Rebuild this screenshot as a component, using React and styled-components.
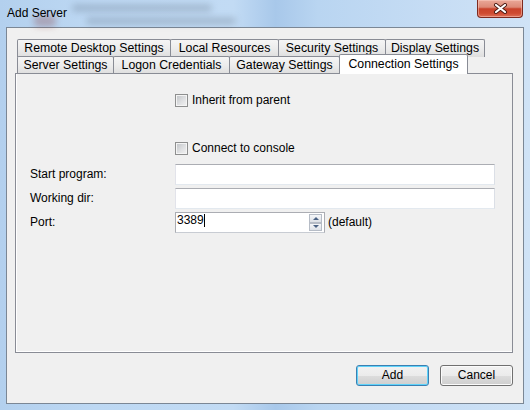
import styled, { createGlobalStyle } from "styled-components";

const GlobalStyle = createGlobalStyle`
  html, body {
    margin: 0;
    padding: 0;
  }
  body {
    font-family: "Liberation Sans", Arial, sans-serif;
    font-size: 12px;
    color: #000;
    background: #bcd6f1;
  }
`;

const Window = styled.div`
  position: relative;
  width: 530px;
  height: 410px;
  box-sizing: border-box;
  display: flex;
  flex-direction: column;
  padding: 0 6px 6px 6px;
  overflow: hidden;
  background: linear-gradient(
    90deg,
    #b3d0ee 0%,
    #bdd8f3 18%,
    #c2dbf4 44%,
    #a8c8ea 52%,
    #b9d5f1 60%,
    #c5dcf4 80%,
    #d0e3f6 100%
  );
`;

// blurred desktop showing through the glass frame
const Haze = styled.div`
  position: absolute;
  left: ${(p) => p.$x}px;
  top: ${(p) => p.$y}px;
  width: ${(p) => p.$w}px;
  height: ${(p) => p.$h}px;
  background: ${(p) => p.$c};
  filter: blur(3px);
  border-radius: 4px;
`;

const TitleBar = styled.div`
  position: relative;
  height: 27px;
  flex: none;
  display: flex;
  align-items: flex-start;
  justify-content: space-between;
`;

const Title = styled.div`
  padding: 6px 0 0 1px;
  font-size: 12px;
  color: #000;
`;

const CloseButton = styled.div`
  width: 46px;
  height: 18px;
  margin-right: 1px;
  box-sizing: border-box;
  border: 1px solid #7e2a1f;
  border-top: none;
  border-radius: 0 0 4px 4px;
  background: linear-gradient(
    #eaa898 0%,
    #dd8a77 42%,
    #c9432b 52%,
    #cf4b31 78%,
    #de7058 100%
  );
  box-shadow: inset 0 0 0 1px rgba(255, 215, 205, 0.45);
  display: flex;
  align-items: center;
  justify-content: center;
`;

const Client = styled.div`
  flex: 1;
  display: flex;
  flex-direction: column;
  background: #f0f0f0;
  border: 1px solid #7b8795;
`;

const TabStrip = styled.div`
  margin: 11px 0 0 10px;
  display: flex;
  flex-direction: column;
`;

const TabRow = styled.div`
  height: 17px;
  display: flex;
  align-items: flex-start;
`;

const Tab = styled.div`
  position: relative;
  box-sizing: border-box;
  width: ${(p) => p.$w}px;
  height: ${(p) => (p.$active ? 20 : 18)}px;
  margin-top: ${(p) => (p.$active ? -2 : 0)}px;
  margin-right: -1px;
  border: 1px solid #898c95;
  border-bottom: none;
  border-radius: 2px 2px 0 0;
  background: ${(p) =>
    p.$active
      ? "#ffffff"
      : "linear-gradient(#f5f5f5 0%, #ececec 50%, #dedede 100%)"};
  z-index: ${(p) => (p.$active ? 2 : 0)};
  display: flex;
  justify-content: center;
  padding-top: ${(p) => (p.$active ? 2 : 1)}px;
  font-size: 12.3px;
  line-height: 14px;
  white-space: nowrap;
`;

const Panel = styled.div`
  position: relative;
  z-index: 1;
  height: 280px;
  box-sizing: border-box;
  margin: 0 10px 0 8px;
  border: 1px solid #898c95;
  background: #f0f0f0;
  box-shadow: inset 1px -1px 0 #ffffff;
`;

const Form = styled.div`
  display: flex;
  flex-direction: column;
  padding: 20px 0 0 14px;
`;

const Row = styled.div`
  display: flex;
  align-items: center;
  height: ${(p) => p.$h}px;
  margin-top: ${(p) => p.$gap || 0}px;
`;

const Label = styled.div`
  width: 145px;
  flex: none;
  font-size: 12px;
  margin-top: -2px;
`;

const CheckLabel = styled.label`
  display: flex;
  align-items: center;
  gap: 4px;
  font-size: 12px;
  line-height: 13px;
`;

const CheckBox = styled.span`
  width: 13px;
  height: 13px;
  box-sizing: border-box;
  border: 1px solid #8e8f8f;
  background: linear-gradient(135deg, #bfc2c6 0%, #dfe0e2 55%, #f3f3f3 100%);
  box-shadow: inset 0 0 0 1px #f4f4f4;
`;

const TextField = styled.div`
  width: ${(p) => p.$w}px;
  height: 21px;
  box-sizing: border-box;
  background: #fff;
  border: 1px solid #e3e9ef;
  border-top-color: #abadb3;
  border-left-color: #e2e3ea;
  border-right-color: #dbdfe6;
`;

const SpinField = styled(TextField)`
  display: flex;
  border: 1px solid #abadb3;
  border-bottom-color: #c8ccd3;
  padding: 0 2px 0 1px;
`;

const SpinValue = styled.div`
  flex: 1;
  display: flex;
  align-items: flex-start;
  font-size: 12px;
  line-height: 15px;
  padding-top: 0;
`;

const Caret = styled.span`
  display: inline-block;
  width: 1px;
  height: 13px;
  margin-top: 1px;
  background: #000;
`;

const SpinButtons = styled.div`
  width: 13px;
  display: flex;
  flex-direction: column;
  padding: 1px 0;
`;

const SpinButton = styled.div`
  flex: 1;
  box-sizing: border-box;
  border: 1px solid #b6bcc6;
  background: linear-gradient(#f6f7f9, #dde1e7);
  display: flex;
  align-items: center;
  justify-content: center;
  &::after {
    content: "";
    border-left: 3px solid transparent;
    border-right: 3px solid transparent;
    ${(p) =>
      p.$up
        ? "border-bottom: 3px solid #4b6284;"
        : "border-top: 3px solid #4b6284;"}
  }
`;

const Hint = styled.span`
  margin: -2px 0 0 3px;
  font-size: 12px;
`;

const ButtonBar = styled.div`
  display: flex;
  justify-content: flex-end;
  gap: 11px;
  margin: 12px 10px 0 0;
`;

const Button = styled.button`
  width: ${(p) => p.$w}px;
  height: 21px;
  box-sizing: border-box;
  padding: 0 0 2px;
  font: 12px "Liberation Sans", Arial, sans-serif;
  color: #000;
  border: 1px solid ${(p) => (p.$default ? "#3c7fb1" : "#707070")};
  border-radius: 3px;
  background: linear-gradient(#f2f2f2 0%, #ebebeb 50%, #dddddd 51%, #cfcfcf 100%);
  box-shadow: inset 0 0 0 1px ${(p) => (p.$default ? "#5fd3fa" : "#fbfbfb")};
`;

const topTabs = [
  { label: "Remote Desktop Settings", w: 154 },
  { label: "Local Resources", w: 109 },
  { label: "Security Settings", w: 108 },
  { label: "Display Settings", w: 100 },
];

const bottomTabs = [
  { label: "Server Settings", w: 97 },
  { label: "Logon Credentials", w: 117 },
  { label: "Gateway Settings", w: 111 },
  { label: "Connection Settings", w: 129, active: true },
];

const CloseGlyph = () => (
  <svg width="15" height="11" viewBox="0 0 15 11">
    <path d="M3 2 L12 9 M12 2 L3 9" stroke="#4a1a12" strokeWidth="4" strokeLinecap="round" />
    <path d="M3 2 L12 9 M12 2 L3 9" stroke="#ffffff" strokeWidth="2.2" strokeLinecap="round" />
  </svg>
);

const App = () => {
  return (
    <>
      <GlobalStyle />
      <Window>
        <Haze $x={34} $y={15} $w={22} $h={12} $c="rgba(140, 60, 60, 0.3)" />
        <Haze $x={72} $y={4} $w={140} $h={8} $c="rgba(70, 80, 100, 0.22)" />
        <Haze $x={86} $y={17} $w={150} $h={8} $c="rgba(70, 80, 100, 0.22)" />
        <TitleBar>
          <Title>Add Server</Title>
          <CloseButton>
            <CloseGlyph />
          </CloseButton>
        </TitleBar>
        <Client>
          <TabStrip>
            <TabRow>
              {topTabs.map((t) => (
                <Tab key={t.label} $w={t.w}>
                  {t.label}
                </Tab>
              ))}
            </TabRow>
            <TabRow>
              {bottomTabs.map((t) => (
                <Tab key={t.label} $w={t.w} $active={t.active}>
                  {t.label}
                </Tab>
              ))}
            </TabRow>
          </TabStrip>
          <Panel>
            <Form>
              <Row $h={13}>
                <Label />
                <CheckLabel>
                  <CheckBox />
                  Inherit from parent
                </CheckLabel>
              </Row>
              <Row $h={13} $gap={35}>
                <Label />
                <CheckLabel>
                  <CheckBox />
                  Connect to console
                </CheckLabel>
              </Row>
              <Row $h={21} $gap={9}>
                <Label>Start program:</Label>
                <TextField $w={320} />
              </Row>
              <Row $h={21} $gap={3}>
                <Label>Working dir:</Label>
                <TextField $w={320} />
              </Row>
              <Row $h={21} $gap={3}>
                <Label>Port:</Label>
                <SpinField $w={150}>
                  <SpinValue>
                    3389
                    <Caret />
                  </SpinValue>
                  <SpinButtons>
                    <SpinButton $up />
                    <SpinButton />
                  </SpinButtons>
                </SpinField>
                <Hint>(default)</Hint>
              </Row>
            </Form>
          </Panel>
          <ButtonBar>
            <Button $w={73} $default>
              Add
            </Button>
            <Button $w={73}>Cancel</Button>
          </ButtonBar>
        </Client>
      </Window>
    </>
  );
};

export default App;
